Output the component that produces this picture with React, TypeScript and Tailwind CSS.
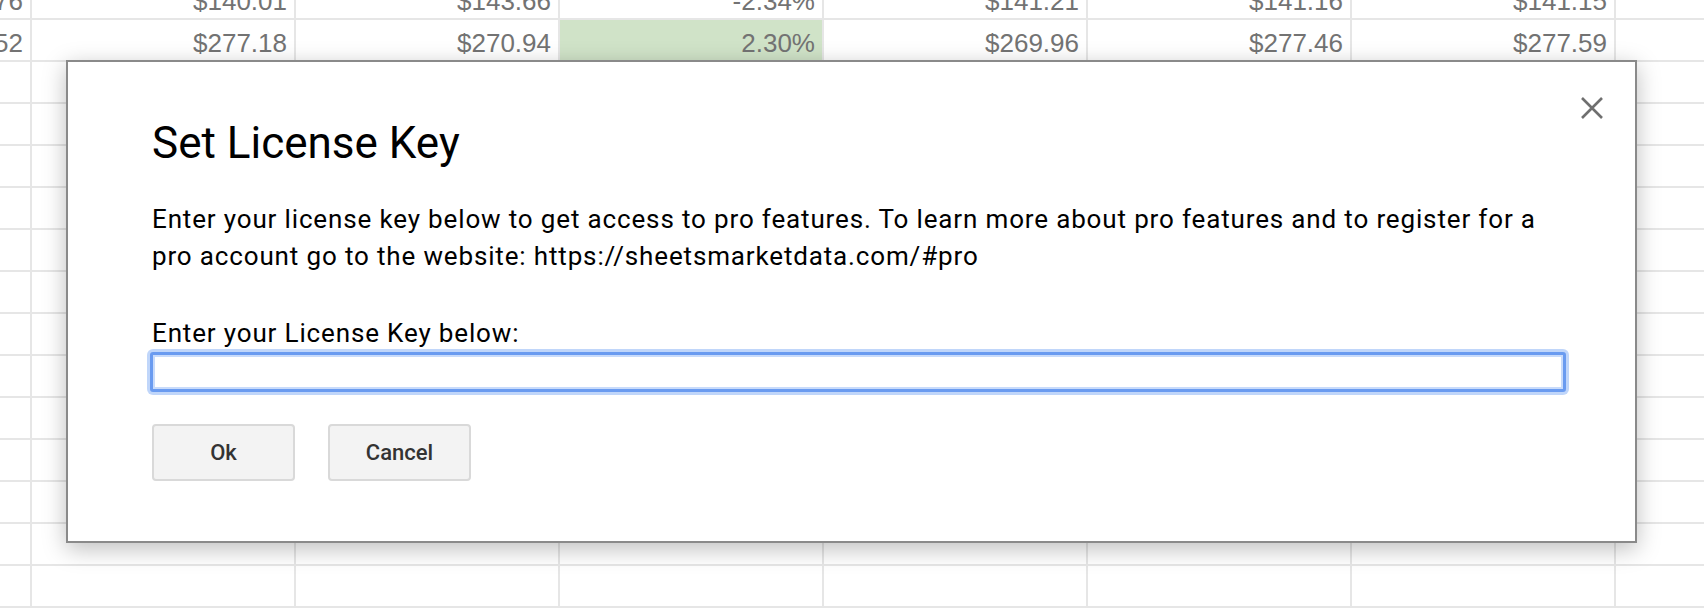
import React from "react";

const rows: string[][] = [
  ["$141.76", "$140.01", "$143.66", "-2.34%", "$141.21", "$141.16", "$141.15", ""],
  ["$276.52", "$277.18", "$270.94", "2.30%", "$269.96", "$277.46", "$277.59", ""],
];

function Cell({ text, green }: { text: string; green?: boolean }) {
  return (
    <div
      className={
        "w-[264px] h-[42px] shrink-0 border-r-2 border-b-2 border-[#e6e6e6] text-right pr-[7px] pt-[6px] leading-[34px] text-[26px] text-[#737373] overflow-hidden whitespace-nowrap " +
        (green ? "bg-[#d0e3c8]" : "bg-white")
      }
      style={{ fontFamily: '"Liberation Sans", Arial, sans-serif' }}
    >
      {text}
    </div>
  );
}

export default function App() {
  const allRows: string[][] = [];
  for (let r = 0; r < 15; r++) {
    allRows.push(rows[r] ?? ["", "", "", "", "", "", "", ""]);
  }
  return (
    <div className="relative w-[1704px] h-[608px] overflow-hidden bg-white">
      <div className="flex flex-col ml-[-232px] mt-[-22px]">
        {allRows.map((row, ri) => (
          <div key={ri} className="flex">
            {row.map((t, ci) => (
              <Cell key={ci} text={t} green={ri === 1 && ci === 3} />
            ))}
          </div>
        ))}
      </div>

      <div
        className="absolute left-[66px] top-[60px] w-[1571px] h-[483px] bg-white border-2 border-[#8a8a8a] shadow-[0_6px_22px_rgba(0,0,0,0.26)]"
        style={{ fontFamily: 'Roboto, "Noto Sans", sans-serif' }}
      >
        <button className="absolute right-[32px] top-[35px] w-[22px] h-[22px]">
          <svg width="22" height="22" viewBox="0 0 22 22">
            <path d="M1 1 L21 21 M21 1 L1 21" stroke="#6f6f6f" strokeWidth="2.6" fill="none" />
          </svg>
        </button>
        <div className="pl-[84px] pt-[55px] pr-[69px]">
          <div className="text-[44px] leading-[52px] text-black">Set License Key</div>
          <div className="mt-[32px] text-[26px] tracking-[0.85px] leading-[37px] text-black">
            Enter your license key below to get access to pro features. To learn more about pro features and to register for a pro account go to the website: https://sheetsmarketdata.com/#pro
          </div>
          <div className="mt-[40px] text-[26px] tracking-[0.85px] leading-[37px] text-black">Enter your License Key below:</div>
          <input
            className="block ml-[-2px] w-[1416px] h-[40px] border-[3px] border-[#6a9bf0] rounded-[3px] bg-white outline-none shadow-[0_0_0_3px_rgba(140,180,245,0.55),inset_0_0_0_2px_#c8dbfb]"
            type="text"
          />
          <div className="flex gap-[33px] mt-[32px]">
            <button className="w-[143px] h-[57px] border-2 border-[#d9d9d9] rounded-[4px] bg-[#f3f3f3] text-[22px] font-medium text-[#333]">
              Ok
            </button>
            <button className="w-[143px] h-[57px] border-2 border-[#d9d9d9] rounded-[4px] bg-[#f3f3f3] text-[22px] font-medium text-[#333]">
              Cancel
            </button>
          </div>
        </div>
      </div>
    </div>
  );
}
